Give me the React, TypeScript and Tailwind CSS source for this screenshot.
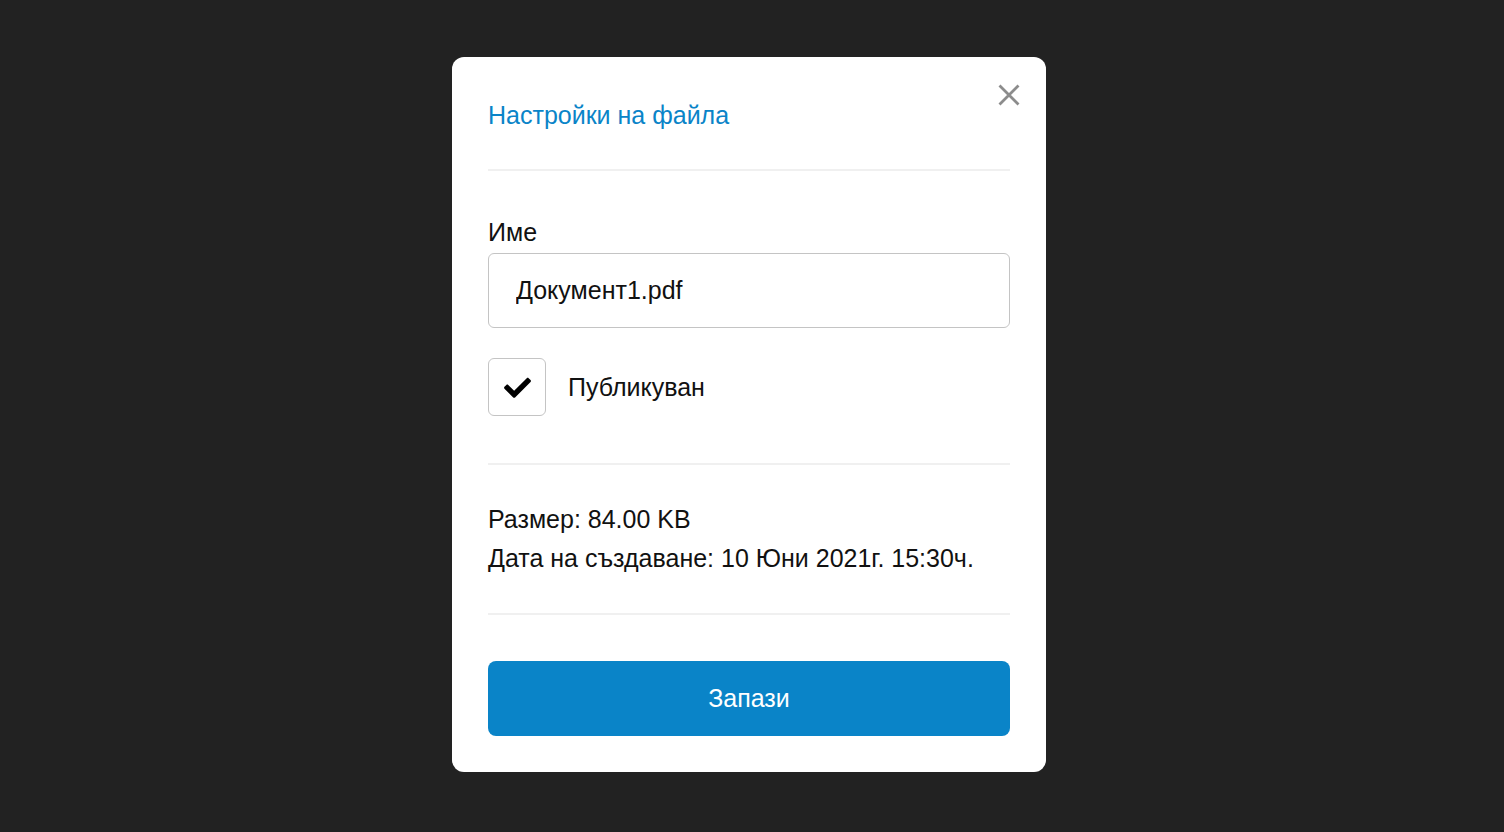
import React, { useState } from 'react';

const FileSettingsModal: React.FC = () => {
  const [name, setName] = useState('Документ1.pdf');
  const [published, setPublished] = useState(true);

  return (
    <div className="relative w-[594px] rounded-xl bg-white px-9 pt-[36px] pb-9">
      <button
        type="button"
        aria-label="Затвори"
        className="absolute right-[26px] top-[27px] flex h-[22px] w-[22px] items-center justify-center text-[#8c8c8c]"
      >
        <svg width="22" height="22" viewBox="0 0 22 22" fill="none" stroke="currentColor" strokeWidth="2.8">
          <path d="M1.5 1.5 L20.5 20.5 M20.5 1.5 L1.5 20.5" />
        </svg>
      </button>

      <h2 className="pt-[7px] pb-[39px] text-[25px] leading-[30px] text-[#0a84c8]">Настройки на файла</h2>
      <div className="h-[2px] bg-[#f0f0f0]" />

      <div className="pt-[46px]">
        <label className="block text-[25px] leading-[30px] text-[#111]">Име</label>
        <input
          value={name}
          onChange={(e) => setName(e.target.value)}
          className="mt-[6px] h-[75px] w-full rounded-md border border-[#c4c4c4] px-[27px] text-[25px] text-[#111] outline-none"
        />
      </div>

      <label className="mt-[30px] flex cursor-pointer items-center gap-[22px]">
        <span
          onClick={() => setPublished(!published)}
          className="flex h-[58px] w-[58px] items-center justify-center rounded-md border border-[#c4c4c4]"
        >
          {published && (
            <svg width="27" height="21" viewBox="0 0 512 400" fill="#000">
              <path d="M173.9 389.4 7.5 223c-10-10-10-26.2 0-36.2l36.2-36.2c10-10 26.2-10 36.2 0L192 262.7 432.1 22.6c10-10 26.2-10 36.2 0l36.2 36.2c10 10 10 26.2 0 36.2L210.1 389.4c-10 10-26.2 10-36.2 0z" />
            </svg>
          )}
        </span>
        <span className="text-[25px] leading-[30px] text-[#111]">Публикуван</span>
      </label>

      <div className="mt-[47px] h-[2px] bg-[#f0f0f0]" />

      <div className="pt-[35px] pb-[35px] text-[25px] leading-[39px] text-[#111]">
        <p>Размер: 84.00 KB</p>
        <p>Дата на създаване: 10 Юни 2021г. 15:30ч.</p>
      </div>

      <div className="h-[2px] bg-[#f0f0f0]" />

      <button
        type="button"
        className="mt-[46px] h-[75px] w-full rounded-lg bg-[#0a84c8] text-[25px] text-white"
      >
        Запази
      </button>
    </div>
  );
};

export default function App() {
  return (
    <div
      className="flex min-h-screen items-start justify-center bg-[#222222] pt-[57px] pr-[6px]"
      style={{ fontFamily: '"Liberation Sans", Arial, sans-serif' }}
    >
      <FileSettingsModal />
    </div>
  );
}
